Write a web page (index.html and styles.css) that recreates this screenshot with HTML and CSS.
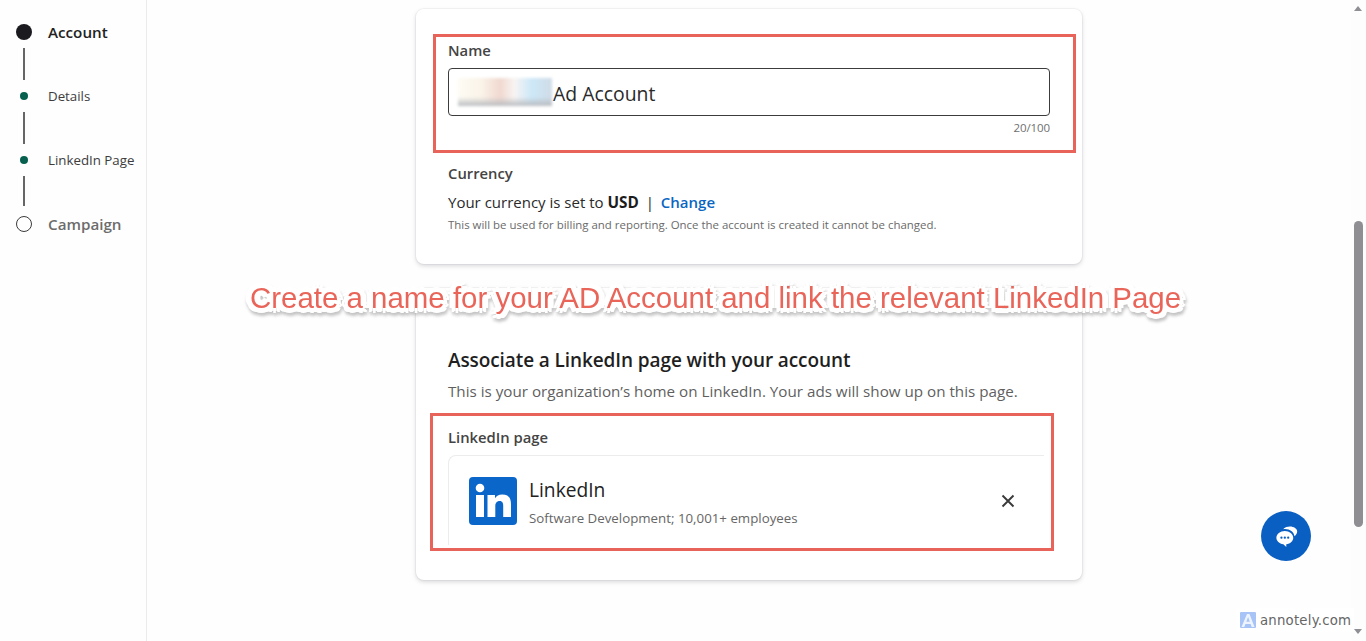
FILE: index.html
```html
<!DOCTYPE html>
<html lang="en">
<head>
<meta charset="utf-8">
<title>Create ad account</title>
<link rel="stylesheet" href="styles.css">
</head>
<body>
<div class="app">
  <nav class="stepper">
    <div class="step step-major">
      <span class="marker"><span class="dot dot-current"></span></span>
      <span class="step-label step-label-current">Account</span>
    </div>
    <div class="connector"></div>
    <div class="step step-minor">
      <span class="marker"><span class="dot dot-done"></span></span>
      <span class="step-label">Details</span>
    </div>
    <div class="connector"></div>
    <div class="step step-minor">
      <span class="marker"><span class="dot dot-done"></span></span>
      <span class="step-label">LinkedIn Page</span>
    </div>
    <div class="connector connector-short"></div>
    <div class="step step-major">
      <span class="marker"><span class="dot dot-todo"></span></span>
      <span class="step-label step-label-todo">Campaign</span>
    </div>
  </nav>

  <main class="content">
    <section class="card card-account">
      <div class="field-label">Name</div>
      <div class="input">
        <span class="redacted"></span>
        <span class="input-text">Ad Account</span>
      </div>
      <div class="counter">20/100</div>
      <div class="field-label currency-label">Currency</div>
      <p class="currency-line">Your currency is set to <b>USD</b> <span class="pipe">|</span> <a class="link" href="#">Change</a></p>
      <p class="hint">This will be used for billing and reporting. Once the account is created it cannot be changed.</p>
    </section>

    <section class="card card-page">
      <h2 class="card-title">Associate a LinkedIn page with your account</h2>
      <p class="card-sub">This is your organization’s home on LinkedIn. Your ads will show up on this page.</p>
      <div class="field-label page-label">LinkedIn page</div>
      <div class="page-box">
        <svg class="li-logo" viewBox="0 0 48 48" aria-hidden="true">
          <rect width="48" height="48" rx="4" fill="#0a66c8"/>
          <circle cx="11" cy="11" r="4.300" fill="#fff"/>
          <rect x="7" y="18" width="8" height="22" fill="#fff"/>
          <path fill="#fff" d="M18.500 18H26v3.200c1.300-2.200 3.800-3.800 7.200-3.800 6.800 0 8.800 4 8.800 10V40h-7.800V29c0-2.800-.6-5.100-3.500-5.100-3 0-4.400 2.200-4.400 5.100v11h-7.800z"/>
        </svg>
        <div class="page-info">
          <div class="page-name">LinkedIn</div>
          <div class="page-meta">Software Development; 10,001+ employees</div>
        </div>
        <svg class="close" viewBox="0 0 14 14" aria-hidden="true">
          <path d="M1.500 1.500l11 11M12.500 1.500l-11 11" stroke="#3a3a3a" stroke-width="1.900" fill="none"/>
        </svg>
      </div>
    </section>
  </main>

  <div class="scrollbar">
    <span class="arrow arrow-up"></span>
    <span class="thumb"></span>
    <span class="arrow arrow-down"></span>
  </div>
</div>

<div class="note-box note-box-name"></div>
<div class="note-box note-box-page"></div>
<div class="note-text">Create a name for your AD Account and link the relevant LinkedIn Page</div>

<button class="chat" aria-label="Messaging">
  <svg viewBox="0 0 24 24" width="27" height="27" aria-hidden="true">
    <path fill="#fff" d="M9.500 4.800C10.800 3.600 12.800 3 15 3c3.600 0 6.500 1.900 6.500 4.600 0 1.700-1 3.100-2.400 4.100-.5-3.500-4-6.300-8.400-6.300-.4 0-.8 0-1.200.1z"/>
    <path fill="#fff" d="M10.500 7C6.400 7 3 9.700 3 13c0 2.900 2.700 5.300 6.200 5.800l2.600 2.500v-2.400c3.500-.5 6.200-3 6.200-5.900C18 9.700 14.600 7 10.500 7z"/>
    <circle cx="7.500" cy="13" r="1" fill="#0a5fc2"/>
    <circle cx="10.500" cy="13" r="1" fill="#0a5fc2"/>
    <circle cx="13.500" cy="13" r="1" fill="#0a5fc2"/>
  </svg>
</button>

<div class="watermark">
  <svg class="wm-logo" viewBox="0 0 16 16" aria-hidden="true">
    <rect width="16" height="16" rx="1" fill="#a8c4f6"/>
    <path fill="#eef4ff" d="M1.500 15L7 2h2.500l5 13h-2.800L10.600 12H5.400l-1.100 3zM6.300 9.800h3.500L8.100 5z"/>
  </svg>
  <span class="wm-text">annotely.com</span>
</div>
</body>
</html>
```
FILE: styles.css
```css
* { box-sizing: border-box; }
html, body { margin: 0; height: 641px; overflow: hidden; }
body {
  background: #fefefe;
  font-family: "Open Sans", "Noto Sans", sans-serif;
  color: #1f1f1f;
}
p, h2 { margin: 0; }

.app { display: flex; height: 641px; }

/* Stepper */
.stepper {
  width: 147px;
  flex: none;
  border-right: 1px solid #ebebeb;
  padding: 20px 0 0 16px;
  display: flex;
  flex-direction: column;
}
.step { display: flex; align-items: center; height: 24px; }
.marker { width: 16px; display: flex; justify-content: center; flex: none; }
.dot { display: block; border-radius: 50%; }
.dot-current { width: 16px; height: 16px; background: #1b1b1f; }
.dot-done { width: 8px; height: 8px; background: #07604f; }
.dot-todo { width: 16px; height: 16px; border: 1px solid #3b3b3b; background: #fff; }
.step-label { margin-left: 16px; font-size: 13.300px; color: #3d3d3d; white-space: nowrap; }
.step-label-current { font-size: 15.200px; font-weight: 600; color: #222; }
.step-label-todo { font-size: 15.200px; font-weight: 600; color: #6c6c6c; }
.connector { width: 2px; height: 32px; margin: 4px 0 4px 7px; background: #666; }
.connector-short { height: 30px; margin-bottom: 6px; }

/* Content */
.content {
  flex: 1;
  padding-top: 9px;
  display: flex;
  flex-direction: column;
  align-items: center;
  gap: 24px;
}
.card {
  width: 666px;
  background: #fff;
  border-radius: 8px;
  box-shadow: 0 0 0 1px rgba(140,140,150,.08), 0 2px 4px rgba(120,120,130,.28);
  padding: 31px 32px 0;
}
.card-account { height: 255px; }
.card-page { height: 292px; padding-top: 60px; }

.field-label { font-size: 14.800px; font-weight: 600; line-height: 20px; color: #444; }
.input {
  margin-top: 8px;
  width: 602px;
  height: 48px;
  border: 1px solid #3c3c3c;
  border-radius: 4px;
  display: flex;
  align-items: center;
  padding-left: 9px;
}
.redacted {
  width: 94px;
  height: 28px;
  flex: none;
  filter: blur(1.500px);
  background:
    linear-gradient(to bottom, transparent 68%, #b8bbc0 100%),
    linear-gradient(to right, #fdfcf4 0%, #faf3e8 25%, #f0d8d0 45%, #f8f4f2 60%, #cde8f8 78%, #cfdbe6 100%);
}
.input-text { font-size: 19.400px; color: #2a2a2a; margin: 2px 0 0 1px; }
.counter { width: 602px; margin-top: 4px; text-align: right; font-size: 11.500px; line-height: 16px; color: #6f6f6f; letter-spacing: -.1px; }
.currency-label { margin-top: 27px; }
.currency-line { margin-top: 9px; font-size: 15px; line-height: 20px; color: #2a2a2a; }
.currency-line b { font-weight: 700; color: #1c1c1c; font-size: 15.300px; }
.pipe { margin: 0 3px; color: #1c1c1c; }
.link { color: #0a66c2; font-weight: 600; text-decoration: none; }
.hint { margin-top: 5px; font-size: 11.450px; line-height: 16px; color: #6a6a6a; }

.card-title { font-size: 19px; line-height: 24px; font-weight: 600; color: #1f1f1f; letter-spacing: -.1px; }
.card-sub { margin-top: 9px; font-size: 15.200px; line-height: 20px; color: #5f5f5f; }
.page-label { margin-top: 26px; }
.page-box {
  margin-top: 8px;
  width: 596px;
  height: 90px;
  border: 1px solid #ececec;
  border-right: 0;
  border-bottom: 0;
  border-radius: 8px 0 0 0;
  padding: 21px 0 0 20px;
  display: flex;
  align-items: flex-start;
}
.li-logo { width: 48px; height: 48px; flex: none; }
.page-info { margin-left: 12px; }
.page-name { font-size: 19.200px; line-height: 26px; color: #222; }
.page-meta { font-size: 13.300px; line-height: 18px; color: #666; margin-top: 6px; }
.close { width: 14px; height: 14px; margin: 17px 29px 0 auto; flex: none; }

/* Scrollbar */
.scrollbar { width: 15px; flex: none; background: #fdfdfe; position: relative; }
.thumb { position: absolute; left: 3px; top: 221px; width: 9px; height: 306px; border-radius: 5px; background: #8f8e92; }
.arrow { position: absolute; left: 3px; width: 0; height: 0; border-left: 4.500px solid transparent; border-right: 4.500px solid transparent; }
.arrow-up { top: 6px; border-bottom: 5px solid #8f8e92; }
.arrow-down { top: 629px; border-top: 5px solid #8f8e92; }

/* Annotations overlaid on the page */
.note-box { position: absolute; border: 3px solid #e8645a; }
.note-box-name { left: 433px; top: 34px; width: 643px; height: 119px; }
.note-box-page { left: 430px; top: 413px; width: 624px; height: 138px; }
.note-text {
  position: absolute;
  left: 250px;
  top: 281px;
  font-family: "Liberation Sans", Arial, sans-serif;
  font-size: 29.450px;
  line-height: 34px;
  color: #e9655a;
  white-space: nowrap;
  text-shadow:
    3px 0 0 #fff, -3px 0 0 #fff, 0 3px 0 #fff, 0 -3px 0 #fff,
    3px 3px 0 #fff, -3px 3px 0 #fff, 3px -3px 0 #fff, -3px -3px 0 #fff,
    6px 0 0 #fff, -6px 0 0 #fff, 0 5px 0 #fff, 0 -5px 0 #fff,
    4px 4px 0 #fff, -4px 4px 0 #fff, 4px -4px 0 #fff, -4px -4px 0 #fff;
  filter: drop-shadow(1px 3px 1.500px rgba(110,110,110,.4));
}

.chat {
  position: absolute;
  left: 1261px;
  top: 511px;
  width: 50px;
  height: 50px;
  border: 0;
  border-radius: 50%;
  background: #0a5fc2;
  padding: 0;
  display: flex;
  align-items: center;
  justify-content: center;
}

.watermark {
  position: absolute;
  left: 1236px;
  top: 608px;
  width: 118px;
  height: 24px;
  display: flex;
  align-items: center;
  padding-left: 4px;
  background: rgba(255,255,255,.7);
}
.wm-logo { width: 16px; height: 16px; flex: none; }
.wm-text { margin-left: 4px; font-family: "DejaVu Sans", sans-serif; font-size: 13.300px; color: #666; letter-spacing: .2px; }
```
